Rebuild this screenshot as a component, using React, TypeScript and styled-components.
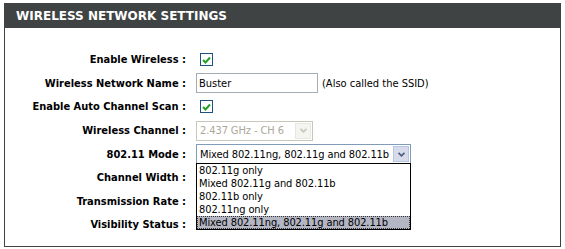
import React from 'react';
import styled, { createGlobalStyle } from 'styled-components';

const GlobalStyle = createGlobalStyle`
  html, body {
    margin: 0;
    padding: 0;
    background: #fff;
  }
  body {
    font-family: 'DejaVu Sans Condensed', 'DejaVu Sans', sans-serif;
    font-size: 11px;
    color: #000;
  }
`;

const PanelStyles = styled.div`
  margin: 3px 0 0 4px;
  width: 557px;
  height: 244px;
  box-sizing: border-box;
  border: 1px solid #404344;
  background: #fff;
`;

const HeaderStyles = styled.div`
  height: 24px;
  line-height: 25px;
  padding-left: 11px;
  background-color: #404344;
  color: #fff;
  font-family: 'DejaVu Sans', sans-serif;
  font-size: 12px;
  font-weight: 700;
`;

const FormStyles = styled.div`
  padding-top: 20px;
  display: flex;
  flex-direction: column;
`;

const RowStyles = styled.div`
  display: flex;
  flex-direction: row;
  align-items: center;
  height: 23.6px;
  gap: 10px;
`;

const LabelStyles = styled.div`
  width: 181px;
  flex: none;
  text-align: right;
  font-weight: 700;
  white-space: nowrap;
`;

const FieldStyles = styled.div`
  display: flex;
  flex-direction: row;
  align-items: center;
  gap: 4px;
  position: relative;
`;

const CheckboxStyles = styled.span`
  display: inline-flex;
  align-items: center;
  justify-content: center;
  width: 13px;
  height: 13px;
  box-sizing: border-box;
  margin-left: 4px;
  border: 1px solid #1c5180;
  background: #fff;
`;

const TextInputStyles = styled.input`
  width: 122px;
  height: 20px;
  box-sizing: border-box;
  padding: 0 2px;
  border: 1px solid #a5acb2;
  font: inherit;
  color: #000;
  outline: none;
`;

const HintStyles = styled.span`
  white-space: nowrap;
`;

const SelectBoxStyles = styled.div<{ $width: number; $disabled?: boolean }>`
  width: ${(p) => p.$width}px;
  height: 20px;
  box-sizing: border-box;
  display: flex;
  flex-direction: row;
  align-items: center;
  justify-content: space-between;
  padding: 0 1px 0 3px;
  border: 1px solid ${(p) => (p.$disabled ? '#c9c7ba' : '#7f9db9')};
  color: ${(p) => (p.$disabled ? '#aca899' : '#000')};
  background: #fff;
  white-space: nowrap;
  overflow: hidden;
`;

const SelectTextStyles = styled.span`
  flex: 1;
  overflow: hidden;
  letter-spacing: -0.1px;
`;

const ArrowButtonStyles = styled.span<{ $disabled?: boolean }>`
  flex: none;
  width: 16px;
  height: 16px;
  box-sizing: border-box;
  display: inline-flex;
  align-items: center;
  justify-content: center;
  border: 1px solid ${(p) => (p.$disabled ? '#e8e8e2' : '#b7c6e6')};
  background: ${(p) => (p.$disabled ? '#f4f4f0' : '#d8dcea')};
`;

const ListStyles = styled.div`
  position: absolute;
  top: 19px;
  left: 0;
  width: 215px;
  box-sizing: border-box;
  border: 1px solid #000;
  background: #fff;
  z-index: 2;
`;

const OptionStyles = styled.div<{ $selected?: boolean }>`
  height: 13px;
  line-height: 13px;
  padding-left: 2px;
  box-sizing: border-box;
  white-space: nowrap;
  letter-spacing: -0.1px;
  background: ${(p) => (p.$selected ? '#b4b6c4' : '#fff')};
  outline: ${(p) => (p.$selected ? '1px dotted #333' : 'none')};
  outline-offset: -1px;
`;

const CheckMark = () => (
  <svg width="9" height="8" viewBox="0 0 9 8">
    <path d="M1 4 L3.5 6.5 L8 1.5" fill="none" stroke="#21a121" strokeWidth="2" />
  </svg>
);

const Chevron = ({ color }: { color: string }) => (
  <svg width="7" height="5" viewBox="0 0 7 5">
    <path d="M0.5 0.8 L3.5 3.8 L6.5 0.8" fill="none" stroke={color} strokeWidth="1.8" />
  </svg>
);

const modes = [
  '802.11g only',
  'Mixed 802.11g and 802.11b',
  '802.11b only',
  '802.11ng only',
  'Mixed 802.11ng, 802.11g and 802.11b',
];

export default function App() {
  return (
    <>
      <GlobalStyle />
      <PanelStyles>
        <HeaderStyles>WIRELESS NETWORK SETTINGS</HeaderStyles>
        <FormStyles>
          <RowStyles>
            <LabelStyles>Enable Wireless :</LabelStyles>
            <FieldStyles>
              <CheckboxStyles>
                <CheckMark />
              </CheckboxStyles>
            </FieldStyles>
          </RowStyles>
          <RowStyles>
            <LabelStyles>Wireless Network Name :</LabelStyles>
            <FieldStyles>
              <TextInputStyles defaultValue="Buster" />
              <HintStyles>(Also called the SSID)</HintStyles>
            </FieldStyles>
          </RowStyles>
          <RowStyles>
            <LabelStyles>Enable Auto Channel Scan :</LabelStyles>
            <FieldStyles>
              <CheckboxStyles>
                <CheckMark />
              </CheckboxStyles>
            </FieldStyles>
          </RowStyles>
          <RowStyles>
            <LabelStyles>Wireless Channel :</LabelStyles>
            <FieldStyles>
              <SelectBoxStyles $width={117} $disabled>
                <SelectTextStyles>2.437 GHz - CH 6</SelectTextStyles>
                <ArrowButtonStyles $disabled>
                  <Chevron color="#c9c7ba" />
                </ArrowButtonStyles>
              </SelectBoxStyles>
            </FieldStyles>
          </RowStyles>
          <RowStyles>
            <LabelStyles>802.11 Mode :</LabelStyles>
            <FieldStyles>
              <SelectBoxStyles $width={215}>
                <SelectTextStyles>Mixed 802.11ng, 802.11g and 802.11b</SelectTextStyles>
                <ArrowButtonStyles>
                  <Chevron color="#4d6185" />
                </ArrowButtonStyles>
              </SelectBoxStyles>
              <ListStyles>
                {modes.map((m, i) => (
                  <OptionStyles key={m} $selected={i === modes.length - 1}>
                    {m}
                  </OptionStyles>
                ))}
              </ListStyles>
            </FieldStyles>
          </RowStyles>
          <RowStyles>
            <LabelStyles>Channel Width :</LabelStyles>
          </RowStyles>
          <RowStyles>
            <LabelStyles>Transmission Rate :</LabelStyles>
          </RowStyles>
          <RowStyles>
            <LabelStyles>Visibility Status :</LabelStyles>
          </RowStyles>
        </FormStyles>
      </PanelStyles>
    </>
  );
}
